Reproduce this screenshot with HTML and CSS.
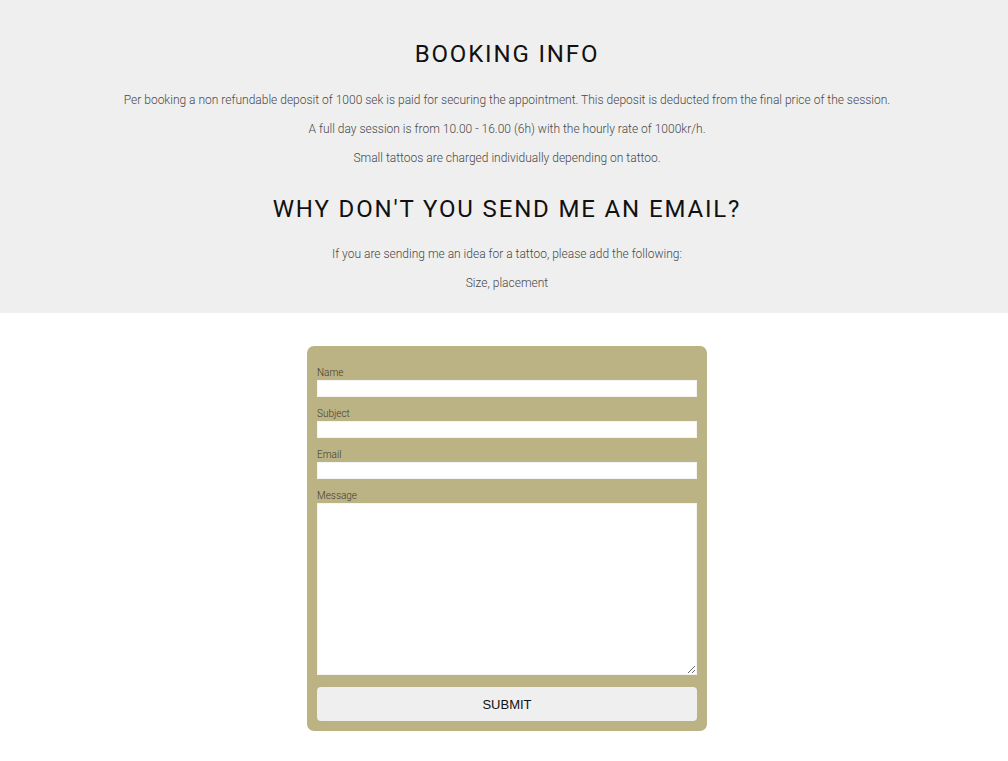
FILE: index.html
```html
<!DOCTYPE html>
<html lang="en">
<head>
<meta charset="utf-8">
<title>Booking</title>
<link rel="stylesheet" href="styles.css">
</head>
<body>
<section class="info">
  <h2 class="title">BOOKING INFO</h2>
  <p>Per booking a non refundable deposit of 1000 sek is paid for securing the appointment. This deposit is deducted from the final price of the session.</p>
  <p>A full day session is from 10.00 - 16.00 (6h) with the hourly rate of 1000kr/h.</p>
  <p>Small tattoos are charged individually depending on tattoo.</p>
  <h2 class="title second">WHY DON'T YOU SEND ME AN EMAIL?</h2>
  <p>If you are sending me an idea for a tattoo, please add the following:</p>
  <p>Size, placement</p>
</section>
<section class="contact">
  <form class="form">
    <div class="field">
      <label for="name">Name</label>
      <input id="name" type="text">
    </div>
    <div class="field">
      <label for="subject">Subject</label>
      <input id="subject" type="text">
    </div>
    <div class="field">
      <label for="email">Email</label>
      <input id="email" type="email">
    </div>
    <div class="field">
      <label for="message">Message</label>
      <textarea id="message"></textarea>
    </div>
    <button type="button" class="submit">SUBMIT</button>
  </form>
</section>
</body>
</html>
```
FILE: styles.css
```css
* { box-sizing: border-box; }
body {
  margin: 0;
  background: #fff;
  font-family: Roboto, "Liberation Sans", sans-serif;
}
.info {
  background: #efefef;
  text-align: center;
  padding: 37px 0 8px 6px;
}
.title {
  margin: 0 0 22px;
  font-size: 24px;
  font-weight: 400;
  letter-spacing: 1.85px;
  line-height: 34px;
  color: #111;
}
.title.second {
  margin-top: 26px;
  margin-bottom: 21px;
}
.info p {
  margin: 0 0 14px;
  font-size: 12px;
  font-weight: 300;
  line-height: 15px;
  color: #484848;
}
.contact {
  display: flex;
  justify-content: center;
  padding: 33px 0 30px 6px;
}
.form {
  width: 400px;
  background: #bcb384;
  border-radius: 7px;
  padding: 0 10px 10px;
  display: flex;
  flex-direction: column;
}
.field {
  display: flex;
  flex-direction: column;
  margin-top: 20px;
}
.field + .field { margin-top: 10px; }
.field label {
  font-size: 10px;
  font-weight: 300;
  line-height: 14px;
  color: #3a3a30;
}
.field input {
  height: 17px;
  border: 1px solid #f4f4f4;
  background: #fff;
  margin: 0;
  padding: 0 4px;
}
.field textarea {
  height: 172px;
  border: 1px solid #f4f4f4;
  background: #fff;
  margin: 0;
  resize: vertical;
}
.submit {
  margin-top: 12px;
  height: 34px;
  border: none;
  border-radius: 4px;
  background: #efefef;
  font-family: "Liberation Sans", Arial, sans-serif;
  font-size: 13px;
  color: #111;
}
```
